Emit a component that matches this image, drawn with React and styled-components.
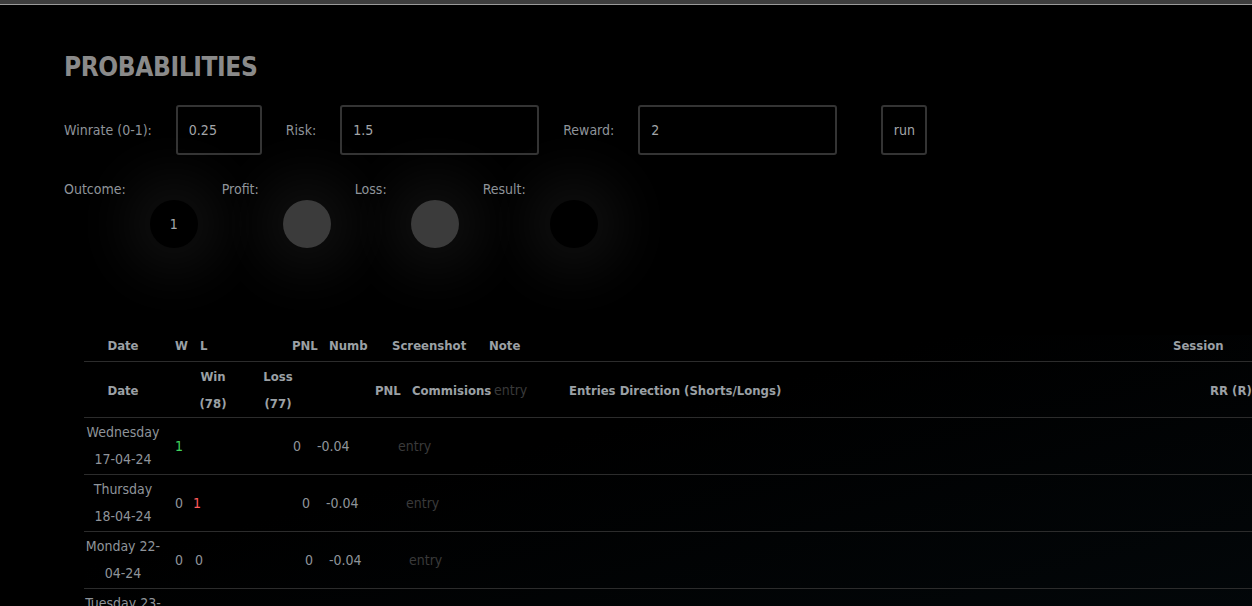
import React from "react";
import styled, { createGlobalStyle } from "styled-components";

const COLOR = {
  BG: "#000",
  TEXT: "#8f949a",
  HEAD: "#9ba0a5",
  TITLE: "#8a8a8a",
  LINE: "#2c2c2c",
  BOX: "#343434",
  DIM: "#3a3a3a",
  WIN: "#3fd45e",
  LOSS: "#ff5b5b",
};

const GlobalStyle = createGlobalStyle`
  html, body {
    margin: 0;
    background: ${COLOR.BG};
    overflow: hidden;
  }
  body {
    font-family: "DejaVu Sans Condensed", "DejaVu Sans", sans-serif;
    font-stretch: condensed;
    font-size: 14px;
    color: ${COLOR.TEXT};
  }
`;

// each day row lays its cells out on its own track list
const rows = [
  { day: "Wednesday", date: "17-04-24", w: "1", l: "", pnl: "0", com: "-0.04",
    cols: "78px 13px 118px 24px 81px 1fr", wColor: COLOR.WIN },
  { day: "Thursday", date: "18-04-24", w: "0", l: "1", pnl: "0", com: "-0.04",
    cols: "78px 13px 18px 109px 24px 80px 1fr", lColor: COLOR.LOSS },
  { day: "Monday 22-", date: "04-24", w: "0", l: "0", pnl: "0", com: "-0.04",
    cols: "78px 13px 20px 110px 24px 80px 1fr" },
  { day: "Tuesday 23-", date: "04-24", w: "0", l: "0", pnl: "0", com: "-0.04",
    cols: "78px 13px 20px 110px 24px 80px 1fr" },
];

export default function App() {
  return (
    <>
      <GlobalStyle />
      <TopBar />
      <Page>
        <Title>PROBABILITIES</Title>

        <InputRow>
          <Label>Winrate (0-1):</Label>
          <Field width={86} defaultValue="0.25" />
          <Label>Risk:</Label>
          <Field width={199} defaultValue="1.5" />
          <Label>Reward:</Label>
          <Field width={199} defaultValue="2" />
          <RunButton>run</RunButton>
        </InputRow>

        <OutcomeRow>
          <Label>Outcome:</Label>
          <Bubble>1</Bubble>
          <Label>Profit:</Label>
          <Bubble filled />
          <Label>Loss:</Label>
          <Bubble filled />
          <Label>Result:</Label>
          <Bubble />
        </OutcomeRow>

        <Table>
          <HeadRow cols="78px 38px 92px 37px 63px 97px 684px 1fr">
            <Cell center>Date</Cell>
            <Cell offset={13}>W</Cell>
            <Cell>L</Cell>
            <Cell>PNL</Cell>
            <Cell>Numb</Cell>
            <Cell>Screenshot</Cell>
            <Cell>Note</Cell>
            <Cell>Session</Cell>
          </HeadRow>

          <SubHeadRow cols="78px 89px 54px 107px 82px 75px 641px 1fr">
            <Cell center>Date</Cell>
            <Cell center offset={13}>Win<br />(78)</Cell>
            <Cell center>Loss<br />(77)</Cell>
            <Cell offset={70}>PNL</Cell>
            <Cell>Commisions</Cell>
            <Entry>entry</Entry>
            <Cell>Entries Direction (Shorts/Longs)</Cell>
            <Cell>RR (R)</Cell>
          </SubHeadRow>

          {rows.map((r) => (
            <DataRow key={r.day} cols={r.cols}>
              <Cell center>{r.day}<br />{r.date}</Cell>
              <span />
              <Value color={r.wColor}>{r.w}</Value>
              {r.l !== "" && <Value color={r.lColor}>{r.l}</Value>}
              <Value>{r.pnl}</Value>
              <Value>{r.com}</Value>
              <Entry>entry</Entry>
            </DataRow>
          ))}
        </Table>
      </Page>
    </>
  );
}

const TopBar = styled.div`
  height: 4px;
  background: #3d3d3d;
  border-bottom: 1px solid #9a9a9a;
`;

const Page = styled.div`
  padding: 45px 0 0 64px;
`;

const Title = styled.h1`
  margin: 0;
  font-size: 26px;
  line-height: 34px;
  font-weight: 700;
  color: ${COLOR.TITLE};
  letter-spacing: -0.4px;
`;

const InputRow = styled.div`
  display: flex;
  align-items: center;
  gap: 24px;
  margin-top: 21px;
`;

const Label = styled.span`
  line-height: 18px;
  white-space: nowrap;
`;

const Field = styled.input.attrs({ type: "text" })`
  box-sizing: border-box;
  width: ${(props) => props.width}px;
  height: 50px;
  padding: 0 0 0 11px;
  background: transparent;
  border: 2px solid ${COLOR.BOX};
  border-radius: 3px;
  color: #a3a6a9;
  font: inherit;
  outline: none;
`;

const RunButton = styled.button`
  box-sizing: border-box;
  height: 50px;
  width: 46px;
  margin-left: 20px;
  padding: 0;
  background: transparent;
  border: 2px solid ${COLOR.BOX};
  border-radius: 3px;
  color: #a3a6a9;
  font: inherit;
`;

const OutcomeRow = styled.div`
  display: flex;
  align-items: flex-start;
  gap: 24px;
  margin-top: 25px;
`;

const Bubble = styled.div`
  display: flex;
  align-items: center;
  justify-content: center;
  flex: none;
  width: 48px;
  height: 48px;
  margin-top: 20px;
  border-radius: 50%;
  background: ${(props) => (props.filled ? "#3b3b3b" : "#000")};
  color: #a3a6a9;
  box-shadow: 0 0 60px 24px rgba(255, 255, 255, 0.065);
`;

const Table = styled.div`
  width: 1300px;
  margin: 87px 0 0 20px;
  background: linear-gradient(165deg, #000 35%, #03080b 100%);
`;

const HeadRow = styled.div`
  display: grid;
  grid-template-columns: ${(props) => props.cols};
  align-items: center;
  padding-bottom: 4px;
  line-height: 22px;
  font-weight: 700;
  font-size: 13px;
  color: ${COLOR.HEAD};
  border-bottom: 1px solid ${COLOR.LINE};
`;

const SubHeadRow = styled(HeadRow)`
  padding: 1px 0 0;
  line-height: 27px;
`;

const DataRow = styled.div`
  display: grid;
  grid-template-columns: ${(props) => props.cols};
  align-items: center;
  padding: 1px 0 1px;
  line-height: 27px;
  border-bottom: 1px solid ${COLOR.LINE};
`;

const Cell = styled.div`
  white-space: nowrap;
  text-align: ${(props) => (props.center ? "center" : "left")};
  margin-left: ${(props) => props.offset || 0}px;
`;

const Value = styled.div`
  white-space: nowrap;
  color: ${(props) => props.color || COLOR.TEXT};
`;

const Entry = styled.div`
  color: ${COLOR.DIM};
  font-weight: 400;
  font-size: 14px;
`;
